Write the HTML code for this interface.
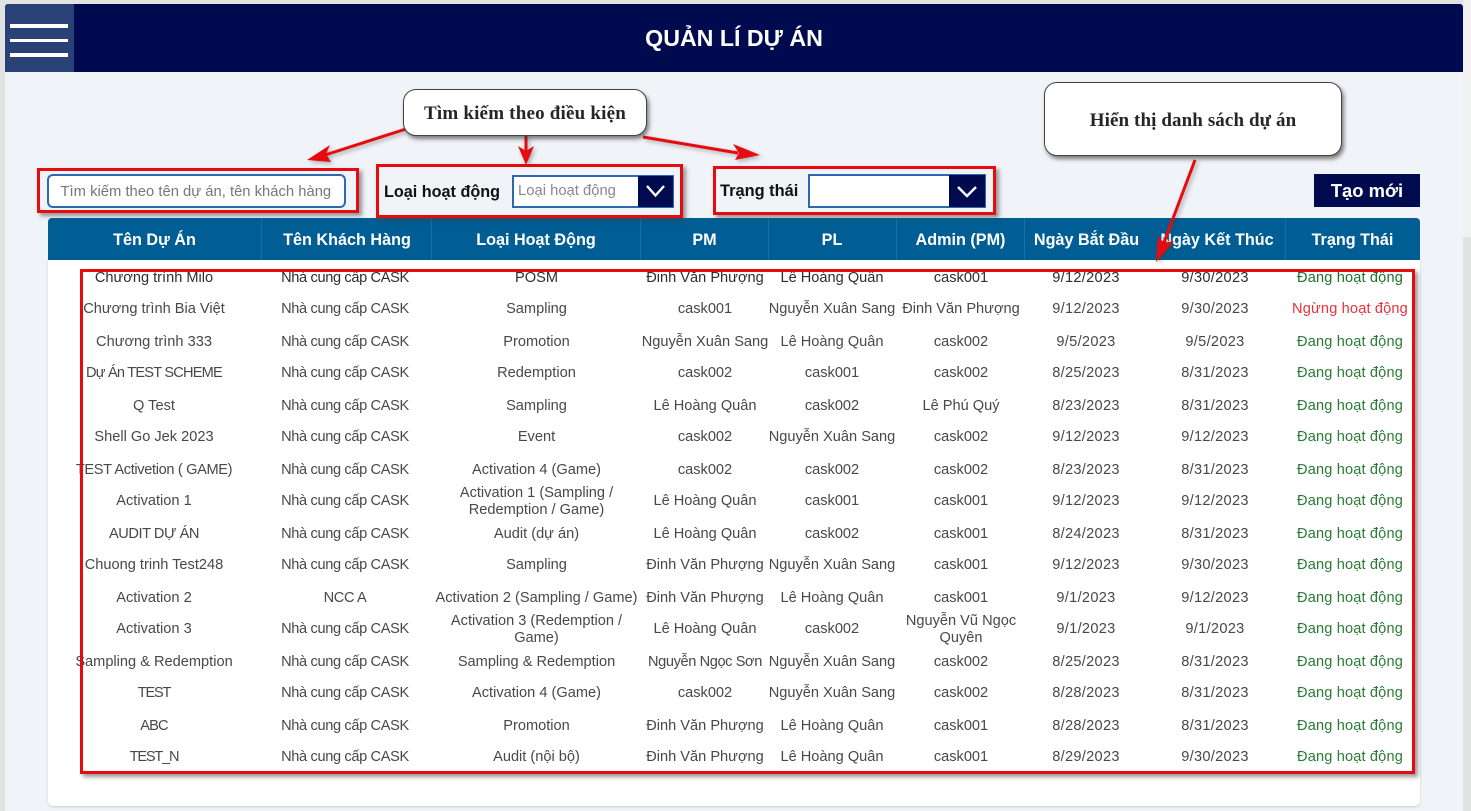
<!DOCTYPE html>
<html lang="vi"><head><meta charset="utf-8"><title>Quản lí dự án</title>
<style>
html,body{margin:0;padding:0}
body{width:1471px;height:811px;position:relative;overflow:hidden;background:#e2e2e2;font-family:"Liberation Sans",sans-serif;color:#444}
div,span{box-sizing:border-box}
.abs{position:absolute}
#page{left:5px;top:4px;width:1458px;height:807px;background:#f0f3f8}
#sb{left:1463px;top:0;width:8px;height:237px;background:#f1f1f1}
#bar{left:5px;top:4px;width:1458px;height:68px;background:#000b4f;border-radius:3px 3px 0 0}
#menu{left:5px;top:4px;width:69px;height:68px;background:#2a4178;border-radius:3px 0 0 0}
.ml{position:absolute;left:5px;width:58px;height:3.5px;background:#fff}
#title{left:5px;top:24px;width:1458px;text-align:center;color:#fff;font-weight:bold;font-size:23.2px;line-height:28px}
#card{left:48px;top:260px;width:1372px;height:546px;background:#fff;border-radius:0 0 5px 5px;box-shadow:0 1px 2px #c8ced8}
#head{left:48px;top:218px;width:1372px;height:42px;background:#005e94;border-radius:4px 4px 0 0}
.hd{position:absolute;top:218px;height:42px;line-height:44px;text-align:center;color:#fff;font-weight:bold;font-size:16.2px;white-space:nowrap}
.dv{position:absolute;top:218px;width:1px;height:42px;background:#1a70a3}
.r{position:absolute;left:0;width:1471px;height:0}
.c{position:absolute;top:-17px;height:36px;display:flex;align-items:center;justify-content:center;text-align:center;font-size:14.6px;line-height:17px;color:#484848;white-space:nowrap}
.c1{left:54px;width:200px}.c2{left:245px;width:200px;letter-spacing:-.36px}.c3{left:426.5px;width:220px}.c4{left:625px;width:160px}.c5{left:752px;width:160px}.c6{left:881px;width:160px}.c7{left:1006px;width:160px;letter-spacing:.3px}.c8{left:1135px;width:160px;letter-spacing:.3px}.c9{left:1270px;width:160px;letter-spacing:.15px}
.g{color:#2a7b33}.rd{color:#e9323a}
.b{color:#2e2e2e}
.red{position:absolute;border:3.5px solid #e60b0f;box-shadow:3px 3px 4px rgba(70,70,70,.55)}
.input{position:absolute;background:#fff;border:2px solid #2d69ae}
.drop{position:absolute;background:#000b4f}
.lab{position:absolute;font-weight:bold;font-size:16.2px;color:#111;line-height:20px;white-space:nowrap}
.call{position:absolute;background:#fff;border:1px solid #444;border-radius:13px;box-shadow:2px 3px 4px rgba(40,40,40,.6);font-family:"Liberation Serif",serif;font-weight:bold;color:#262626;font-size:19px;text-align:center;white-space:nowrap}
#new{left:1314px;top:174px;width:106px;height:33px;background:#000b4f;color:#fff;font-weight:bold;font-size:18.4px;line-height:34px;text-align:center}
svg{position:absolute}
</style></head><body>
<div class="abs" id="page"></div>
<div class="abs" id="sb"></div>
<div class="abs" id="bar"></div>
<div class="abs" id="menu"></div>
<div class="ml" style="left:10px;top:24px"></div><div class="ml" style="left:10px;top:38.5px"></div><div class="ml" style="left:10px;top:53px"></div>
<div class="abs" id="title">QUẢN LÍ DỰ ÁN</div>

<div class="abs" id="card"></div>
<div class="abs" id="head"></div>
<div class="dv" style="left:261px"></div><div class="dv" style="left:431px"></div><div class="dv" style="left:640px"></div><div class="dv" style="left:768px"></div><div class="dv" style="left:896px"></div><div class="dv" style="left:1024px"></div><div class="dv" style="left:1285px"></div>
<div class="hd" style="left:54.5px;width:200px">Tên Dự Án</div>
<div class="hd" style="left:247px;width:200px">Tên Khách Hàng</div>
<div class="hd" style="left:436px;width:200px">Loại Hoạt Động</div>
<div class="hd" style="left:654.5px;width:100px">PM</div>
<div class="hd" style="left:782px;width:100px">PL</div>
<div class="hd" style="left:900.5px;width:120px">Admin (PM)</div>
<div class="hd" style="left:1026.5px;width:120px">Ngày Bắt Đầu</div>
<div class="hd" style="left:1157px;width:120px">Ngày Kết Thúc</div>
<div class="hd" style="left:1292.5px;width:120px">Trạng Thái</div>

<div class="r" style="top:277px"><span class="c c1 b">Chương trình Milo</span><span class="c c2 b">Nhà cung cấp CASK</span><span class="c c3 b">POSM</span><span class="c c4 b">Đinh Văn Phượng</span><span class="c c5 b">Lê Hoàng Quân</span><span class="c c6 b">cask001</span><span class="c c7 b">9/12/2023</span><span class="c c8 b">9/30/2023</span><span class="c c9" style="color:#1f7029">Đang hoạt động</span></div>
<div class="r" style="top:308px"><span class="c c1">Chương trình Bia Việt</span><span class="c c2">Nhà cung cấp CASK</span><span class="c c3">Sampling</span><span class="c c4">cask001</span><span class="c c5">Nguyễn Xuân Sang</span><span class="c c6">Đinh Văn Phượng</span><span class="c c7">9/12/2023</span><span class="c c8">9/30/2023</span><span class="c c9 rd">Ngừng hoạt động</span></div>
<div class="r" style="top:341px"><span class="c c1">Chương trình 333</span><span class="c c2">Nhà cung cấp CASK</span><span class="c c3">Promotion</span><span class="c c4">Nguyễn Xuân Sang</span><span class="c c5">Lê Hoàng Quân</span><span class="c c6">cask002</span><span class="c c7">9/5/2023</span><span class="c c8">9/5/2023</span><span class="c c9 g">Đang hoạt động</span></div>
<div class="r" style="top:372px"><span class="c c1" style="letter-spacing:-.8px">Dự Án TEST SCHEME</span><span class="c c2">Nhà cung cấp CASK</span><span class="c c3">Redemption</span><span class="c c4">cask002</span><span class="c c5">cask001</span><span class="c c6">cask002</span><span class="c c7">8/25/2023</span><span class="c c8">8/31/2023</span><span class="c c9 g">Đang hoạt động</span></div>
<div class="r" style="top:405px"><span class="c c1">Q Test</span><span class="c c2">Nhà cung cấp CASK</span><span class="c c3">Sampling</span><span class="c c4">Lê Hoàng Quân</span><span class="c c5">cask002</span><span class="c c6">Lê Phú Quý</span><span class="c c7">8/23/2023</span><span class="c c8">8/31/2023</span><span class="c c9 g">Đang hoạt động</span></div>
<div class="r" style="top:436px"><span class="c c1">Shell Go Jek 2023</span><span class="c c2">Nhà cung cấp CASK</span><span class="c c3">Event</span><span class="c c4">cask002</span><span class="c c5">Nguyễn Xuân Sang</span><span class="c c6">cask002</span><span class="c c7">9/12/2023</span><span class="c c8">9/12/2023</span><span class="c c9 g">Đang hoạt động</span></div>
<div class="r" style="top:469px"><span class="c c1" style="letter-spacing:-.35px">TEST Activetion ( GAME)</span><span class="c c2">Nhà cung cấp CASK</span><span class="c c3">Activation 4 (Game)</span><span class="c c4">cask002</span><span class="c c5">cask002</span><span class="c c6">cask002</span><span class="c c7">8/23/2023</span><span class="c c8">8/31/2023</span><span class="c c9 g">Đang hoạt động</span></div>
<div class="r" style="top:500px"><span class="c c1">Activation 1</span><span class="c c2">Nhà cung cấp CASK</span><span class="c c3" style="top:-16px">Activation 1 (Sampling /<br>Redemption / Game)</span><span class="c c4">Lê Hoàng Quân</span><span class="c c5">cask001</span><span class="c c6">cask001</span><span class="c c7">9/12/2023</span><span class="c c8">9/12/2023</span><span class="c c9 g">Đang hoạt động</span></div>
<div class="r" style="top:533px"><span class="c c1" style="letter-spacing:-.45px">AUDIT DỰ ÁN</span><span class="c c2">Nhà cung cấp CASK</span><span class="c c3">Audit (dự án)</span><span class="c c4">Lê Hoàng Quân</span><span class="c c5">cask002</span><span class="c c6">cask001</span><span class="c c7">8/24/2023</span><span class="c c8">8/31/2023</span><span class="c c9 g">Đang hoạt động</span></div>
<div class="r" style="top:564px"><span class="c c1">Chuong trinh Test248</span><span class="c c2">Nhà cung cấp CASK</span><span class="c c3">Sampling</span><span class="c c4">Đinh Văn Phượng</span><span class="c c5">Nguyễn Xuân Sang</span><span class="c c6">cask001</span><span class="c c7">9/12/2023</span><span class="c c8">9/30/2023</span><span class="c c9 g">Đang hoạt động</span></div>
<div class="r" style="top:597px"><span class="c c1">Activation 2</span><span class="c c2">NCC A</span><span class="c c3">Activation 2 (Sampling / Game)</span><span class="c c4">Đinh Văn Phượng</span><span class="c c5">Lê Hoàng Quân</span><span class="c c6">cask001</span><span class="c c7">9/1/2023</span><span class="c c8">9/12/2023</span><span class="c c9 g">Đang hoạt động</span></div>
<div class="r" style="top:628px"><span class="c c1">Activation 3</span><span class="c c2">Nhà cung cấp CASK</span><span class="c c3" style="top:-16px">Activation 3 (Redemption /<br>Game)</span><span class="c c4">Lê Hoàng Quân</span><span class="c c5">cask002</span><span class="c c6" style="top:-16px">Nguyễn Vũ Ngọc<br>Quyên</span><span class="c c7">9/1/2023</span><span class="c c8">9/1/2023</span><span class="c c9 g">Đang hoạt động</span></div>
<div class="r" style="top:661px"><span class="c c1">Sampling &amp; Redemption</span><span class="c c2">Nhà cung cấp CASK</span><span class="c c3">Sampling &amp; Redemption</span><span class="c c4" style="letter-spacing:-.4px">Nguyễn Ngọc Sơn</span><span class="c c5">Nguyễn Xuân Sang</span><span class="c c6">cask002</span><span class="c c7">8/25/2023</span><span class="c c8">8/31/2023</span><span class="c c9 g">Đang hoạt động</span></div>
<div class="r" style="top:692px"><span class="c c1" style="letter-spacing:-1.2px">TEST</span><span class="c c2">Nhà cung cấp CASK</span><span class="c c3">Activation 4 (Game)</span><span class="c c4">cask002</span><span class="c c5">Nguyễn Xuân Sang</span><span class="c c6">cask002</span><span class="c c7">8/28/2023</span><span class="c c8">8/31/2023</span><span class="c c9 g">Đang hoạt động</span></div>
<div class="r" style="top:725px"><span class="c c1" style="letter-spacing:-.8px">ABC</span><span class="c c2">Nhà cung cấp CASK</span><span class="c c3">Promotion</span><span class="c c4">Đinh Văn Phượng</span><span class="c c5">Lê Hoàng Quân</span><span class="c c6">cask001</span><span class="c c7">8/28/2023</span><span class="c c8">8/31/2023</span><span class="c c9 g">Đang hoạt động</span></div>
<div class="r" style="top:756px"><span class="c c1" style="letter-spacing:-1.2px">TEST_N</span><span class="c c2">Nhà cung cấp CASK</span><span class="c c3">Audit (nội bộ)</span><span class="c c4">Đinh Văn Phượng</span><span class="c c5">Lê Hoàng Quân</span><span class="c c6">cask001</span><span class="c c7">8/29/2023</span><span class="c c8">9/30/2023</span><span class="c c9 g">Đang hoạt động</span></div>

<!-- search -->
<div class="input" style="left:47px;top:174px;width:299px;height:34px;border-radius:6px;font-size:14.8px;line-height:33px;color:#777;padding-left:11.5px;white-space:nowrap">Tìm kiếm theo tên dự án, tên khách hàng</div>
<div class="red" style="left:37px;top:168px;width:322px;height:45px"></div>

<!-- loai hoat dong -->
<div class="lab" style="left:384px;top:181.5px">Loại hoạt động</div>
<div class="input" style="left:512px;top:175px;width:162px;height:33px;font-size:14.8px;line-height:28px;color:#888;padding-left:4px;white-space:nowrap">Loại hoạt động</div>
<div class="drop" style="left:638px;top:176px;width:35px;height:31px"></div>
<svg style="left:638px;top:176px" width="35" height="31"><path d="M9 10 L17.5 19.5 L26 10" fill="none" stroke="#fff" stroke-width="2.4"/></svg>
<div class="red" style="left:376px;top:164px;width:307px;height:54px"></div>

<!-- trang thai -->
<div class="lab" style="left:720px;top:181px;font-size:16.4px">Trạng thái</div>
<div class="input" style="left:808px;top:174px;width:178px;height:34px"></div>
<div class="drop" style="left:949px;top:175px;width:36px;height:32px"></div>
<svg style="left:949px;top:175px" width="36" height="32"><path d="M9 12 L18 21 L27 12" fill="none" stroke="#fff" stroke-width="2.4"/></svg>
<div class="red" style="left:713px;top:166px;width:283px;height:49px"></div>

<div class="abs" id="new">Tạo mới</div>

<!-- table highlight -->
<div class="red" style="left:80px;top:269px;width:1335px;height:505px"></div>

<!-- callouts -->
<svg style="left:0;top:0;filter:drop-shadow(2px 2px 2px rgba(60,60,60,.4))" width="1471" height="811">
<g fill="none" stroke="#e60b0f" stroke-width="3">
<path d="M406 129 L325 155"/>
<path d="M526 136 L526 152"/>
<path d="M643 137 L738 153"/>
<path d="M1195 160 L1163 245"/>
</g>
<g fill="#e60b0f" stroke="none">
<path d="M307 160 L330 145 L326 154 L331 162 Z"/>
<path d="M526 165 L518 146 L526 151 L534 146 Z"/>
<path d="M760 155 L735 160 L739 153 L733 144 Z"/>
<path d="M1156 262 L1158 236 L1164 243 L1174 241 Z"/>
</g>
</svg>
<div class="call" style="left:403px;top:89px;width:244px;height:47px;line-height:47px;letter-spacing:.2px">Tìm kiếm theo điều kiện</div>
<div class="call" style="left:1044px;top:82px;width:298px;height:74px;line-height:75px;letter-spacing:.1px">Hiển thị danh sách dự án</div>
</body></html>
